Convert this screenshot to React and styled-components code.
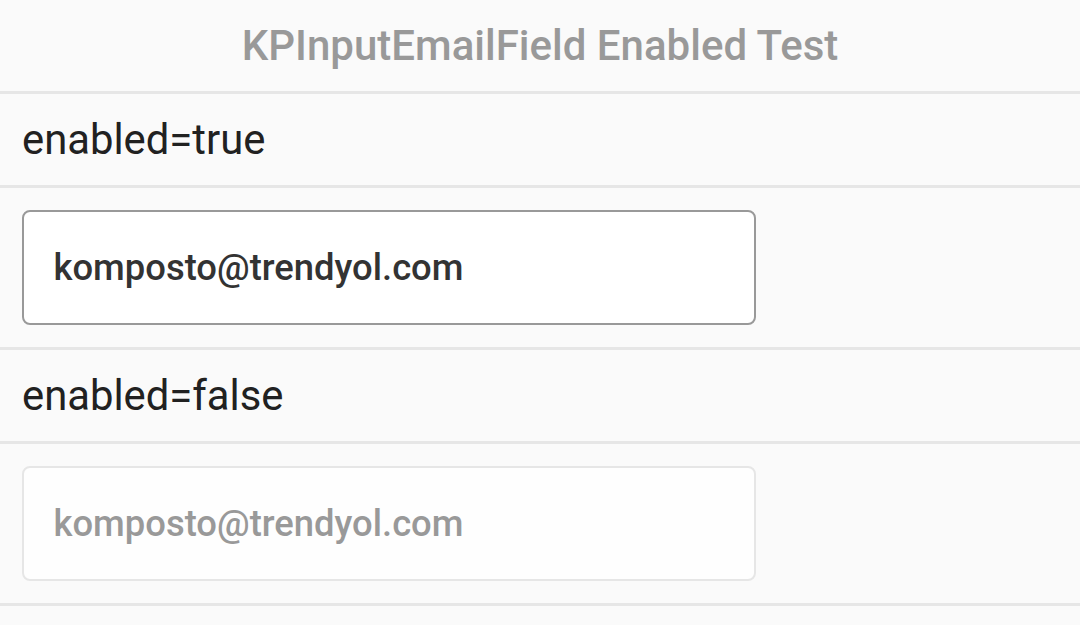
import React from 'react';
import styled, { createGlobalStyle } from 'styled-components';

const GlobalStyle = createGlobalStyle`
  html, body {
    margin: 0;
    padding: 0;
    background: #fafafa;
  }
  body {
    font-family: Roboto, "Noto Sans", sans-serif;
  }
`;

const Page = styled.div`
  width: 1080px;
  height: 625px;
  background: #fafafa;
  overflow: hidden;
`;

const Header = styled.div`
  height: 91px;
  display: flex;
  align-items: center;
  justify-content: center;
  border-bottom: 3px solid #e6e6e6;
  font-size: 42px;
  font-weight: 500;
  color: #999999;
`;

const LabelRow = styled.div`
  height: 91px;
  display: flex;
  align-items: center;
  padding-left: 22px;
  border-bottom: 3px solid #e6e6e6;
  font-size: 41.8px;
  color: #212121;
`;

const FieldRow = styled.div`
  padding: 22px 22px;
  border-bottom: 3px solid #e6e6e6;
`;

const EmailInput = styled.div`
  box-sizing: border-box;
  width: 734px;
  height: 115px;
  display: flex;
  align-items: center;
  padding-left: 29.5px;
  border-radius: 8px;
  border: 2.5px solid ${(props) => (props.disabled ? '#e6e6e6' : '#999999')};
  background: ${(props) => (props.disabled ? '#fefefe' : '#ffffff')};
  color: ${(props) => (props.disabled ? '#999999' : '#333333')};
  font-size: 36.4px;
  font-weight: 500;
`;

const cases = [
    { label: 'enabled=true', disabled: false },
    { label: 'enabled=false', disabled: true },
];

const App = () => {
    return (
        <Page>
            <GlobalStyle />
            <Header>KPInputEmailField Enabled Test</Header>
            {cases.map((c) => (
                <React.Fragment key={c.label}>
                    <LabelRow>{c.label}</LabelRow>
                    <FieldRow>
                        <EmailInput disabled={c.disabled}>komposto@trendyol.com</EmailInput>
                    </FieldRow>
                </React.Fragment>
            ))}
        </Page>
    );
};

export default App;
